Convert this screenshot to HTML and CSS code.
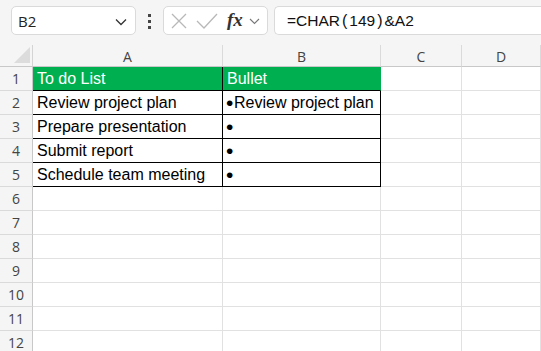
FILE: index.html
```html
<!DOCTYPE html>
<html>
<head>
<meta charset="utf-8">
<link rel="stylesheet" href="styles.css">
</head>
<body>
<div class="toolbar">
  <div class="namebox">
    <span class="ref">B2</span>
    <svg class="chev" width="12" height="8" viewBox="0 0 12 8"><path d="M1 1.5 L6 6.5 L11 1.5" fill="none" stroke="#333" stroke-width="1.3"/></svg>
  </div>
  <div class="dots"><i></i><i></i><i></i></div>
  <div class="fxbox">
    <svg class="ic" width="18" height="18" viewBox="0 0 18 18"><path d="M2 2 L16 16 M16 2 L2 16" stroke="#b8b8b8" stroke-width="1.3" fill="none"/></svg>
    <svg class="ic" width="22" height="18" viewBox="0 0 22 18"><path d="M1 9 L8 16 L21 2" stroke="#b8b8b8" stroke-width="1.3" fill="none"/></svg>
    <span class="fx">fx</span>
    <svg class="chev2" width="11" height="7" viewBox="0 0 11 7"><path d="M1 1 L5.5 5.5 L10 1" fill="none" stroke="#777" stroke-width="1.1"/></svg>
  </div>
  <div class="formula">=CHAR<span class="p">(</span>149<span class="p">)</span>&amp;A2</div>
</div>
<div class="sheet">
  <div class="corner"><span class="tri"></span></div>
  <div class="ch">A</div>
  <div class="ch">B</div>
  <div class="ch">C</div>
  <div class="ch">D</div>

  <div class="rh">1</div>
  <div class="c hd hdA">To do List</div>
  <div class="c hd hdB">Bullet</div>
  <div class="c"></div>
  <div class="c"></div>

  <div class="rh">2</div>
  <div class="c t">Review project plan</div>
  <div class="c t"><span class="b">•</span>Review project plan</div>
  <div class="c"></div>
  <div class="c"></div>

  <div class="rh">3</div>
  <div class="c t">Prepare presentation</div>
  <div class="c t"><span class="b">•</span></div>
  <div class="c"></div>
  <div class="c"></div>

  <div class="rh">4</div>
  <div class="c t">Submit report</div>
  <div class="c t"><span class="b">•</span></div>
  <div class="c"></div>
  <div class="c"></div>

  <div class="rh">5</div>
  <div class="c t">Schedule team meeting</div>
  <div class="c t"><span class="b">•</span></div>
  <div class="c"></div>
  <div class="c"></div>

  <div class="rh">6</div><div class="c"></div><div class="c"></div><div class="c"></div><div class="c"></div>
  <div class="rh">7</div><div class="c"></div><div class="c"></div><div class="c"></div><div class="c"></div>
  <div class="rh">8</div><div class="c"></div><div class="c"></div><div class="c"></div><div class="c"></div>
  <div class="rh">9</div><div class="c"></div><div class="c"></div><div class="c"></div><div class="c"></div>
  <div class="rh">10</div><div class="c"></div><div class="c"></div><div class="c"></div><div class="c"></div>
  <div class="rh">11</div><div class="c"></div><div class="c"></div><div class="c"></div><div class="c"></div>
  <div class="rh">12</div><div class="c"></div><div class="c"></div><div class="c"></div><div class="c"></div>
</div>
</body>
</html>
```
FILE: styles.css
```css
* { box-sizing: border-box; }
html, body { margin: 0; padding: 0; }
body {
  width: 541px;
  height: 351px;
  overflow: hidden;
  background: #ffffff;
  font-family: "Liberation Sans", Arial, sans-serif;
}
.toolbar {
  height: 45px;
  background: #f5f5f5;
  display: flex;
  align-items: flex-start;
  padding: 6px 0 0 11px;
}
.namebox {
  width: 125px;
  height: 29px;
  background: #fff;
  border: 1px solid #dadada;
  border-radius: 5px;
  display: flex;
  align-items: center;
  justify-content: space-between;
  padding: 0 8px 0 6px;
}
.ref { font-family: "Open Sans", sans-serif; font-size: 15px; color: #222; }
.chev { margin-top: 2px; }
.dots {
  width: 27px;
  display: flex;
  flex-direction: column;
  align-items: center;
  gap: 3px;
  padding-top: 8px;
}
.dots i { display: block; width: 3px; height: 3px; background: #444; }
.fxbox {
  width: 105px;
  height: 29px;
  background: #fff;
  border: 1px solid #dadada;
  border-radius: 5px;
  display: flex;
  align-items: center;
  padding-left: 6px;
}
.ic { margin-right: 8px; }
.ic + .ic { margin-right: 9px; }
.fx {
  font-family: "Liberation Serif", serif;
  font-style: italic;
  font-weight: bold;
  font-size: 19px;
  color: #333;
  margin-right: 6px;
  margin-top: -2px;
}
.chev2 { margin-top: 1px; }
.formula {
  margin-left: 6px;
  flex: 1;
  height: 29px;
  background: #fff;
  border: 1px solid #dadada;
  border-right: none;
  border-radius: 5px 0 0 5px;
  padding-left: 12px;
  font-size: 15.5px;
  line-height: 28px;
  color: #111;
}
.formula .p { display: inline-block; margin: 0 2px; font-size: 16px; }
.sheet {
  display: grid;
  grid-template-columns: 33px 190px 158px 81px 79px;
  grid-template-rows: 22px repeat(12, 24px);
}
.corner {
  background: #f5f5f5;
  border-right: 1px solid #d4d4d4;
  border-bottom: 1px solid #c8c8c8;
  position: relative;
}
.tri {
  position: absolute;
  right: 2px;
  bottom: 3px;
  width: 0;
  height: 0;
  border-left: 16px solid transparent;
  border-bottom: 16px solid #dcdcdc;
}
.ch {
  background: #f5f5f5;
  border-right: 1px solid #dadada;
  border-bottom: 1px solid #c8c8c8;
  text-align: center;
  font-family: "Open Sans", sans-serif;
  font-size: 14px;
  line-height: 23px;
  color: #444;
}
.rh {
  background: #f5f5f5;
  border-right: 1px solid #c8c8c8;
  border-bottom: 1px solid #dadada;
  text-align: center;
  font-family: "Open Sans", sans-serif;
  font-size: 14px;
  line-height: 24px;
  color: #444;
}
.c {
  border-right: 1px solid #e1e1e1;
  border-bottom: 1px solid #e1e1e1;
  font-size: 16px;
  line-height: 24px;
  padding-left: 4px;
  white-space: nowrap;
  color: #000;
}
.hd {
  background: #00b050;
  color: #fff;
  border-bottom: 1px solid #000;
}
.hdA { border-right: 1px solid #000; }
.hdB { border-right: 1px solid #00b050; }
.t {
  border-right: 1px solid #000;
  border-bottom: 1px solid #000;
}
.b {
  display: inline-block;
  font-size: 21px;
  line-height: 24px;
  vertical-align: top;
  width: 8px;
  margin-left: -1px;
  overflow: hidden;
}
```
